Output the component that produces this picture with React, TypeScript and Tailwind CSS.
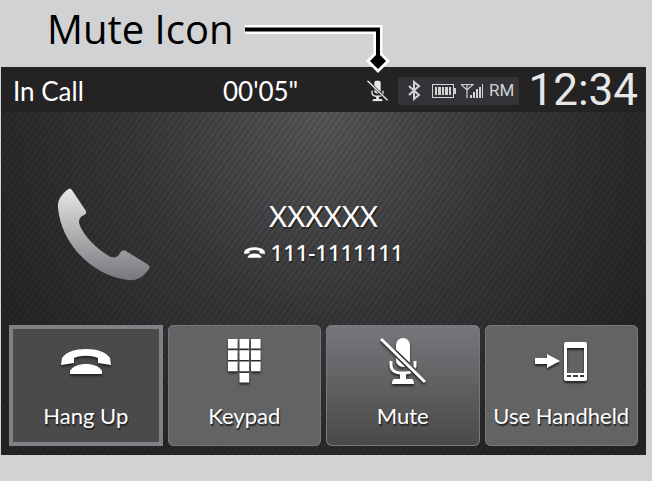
import type { ReactNode } from "react";

function MicOffIcon({ className }: { className?: string }) {
  return (
    <svg viewBox="0 0 46 47" className={className} fill="none" aria-hidden="true">
      <mask id="slash-gap" maskUnits="userSpaceOnUse" x="0" y="0" width="46" height="47">
        <path d="M0 0h46v47H0z" fill="#fff" />
        <path d="M1 1 45 44" stroke="#000" strokeWidth="6" />
      </mask>
      <g mask="url(#slash-gap)">
        <rect x="16" y="0" width="14" height="29" rx="7" fill="currentColor" />
        <path d="M11 23v4c0 5 4 8 9 8h6c5 0 9-3 9-8v-4" stroke="currentColor" strokeWidth="3" />
        <path d="M20 35h6v6h6q2 1 2 5H12q0-4 2-5h6z" fill="currentColor" />
      </g>
      <path d="M1 1 45 44" stroke="currentColor" strokeWidth="3" />
    </svg>
  );
}

function HangUpIcon({ className }: { className?: string }) {
  return (
    <svg viewBox="0 0 50 25" className={className} fill="currentColor" aria-hidden="true">
      <path d="M0 16 1 9C5 3 14 0 25 0s20 3 24 9l1 7-13-2v-5c-7-3-17-3-24 0v5z" />
      <path d="M9 25v-3c3-5 9-7 16-7s13 2 16 7v3z" />
    </svg>
  );
}

function KeypadIcon() {
  const keys = [[0, 0], [1, 0], [2, 0], [0, 1], [1, 1], [2, 1], [0, 2], [1, 2], [2, 2], [1, 3]];
  return (
    <svg viewBox="0 0 33 44" className="h-11 w-[33px]" fill="currentColor" aria-hidden="true">
      {keys.map(([x, y]) => (
        <rect key={`${x}${y}`} x={x * 11.5} y={y * 11.3} width="9.6" height="9.6" rx="0.6" />
      ))}
    </svg>
  );
}

function HandheldIcon() {
  return (
    <svg viewBox="0 0 52 39" className="h-[39px] w-[52px]" fill="currentColor" aria-hidden="true">
      <path d="M0 16h12v-4l13 7-13 7v-4H0z" />
      <path
        fillRule="evenodd"
        d="M31 0h19q2 0 2 2v35q0 2-2 2H31q-2 0-2-2V2q0-2 2-2zm1 6v25h17V6zm0 27v2h4v-2zm6 0v2h5v-2zm7 0v2h4v-2z"
      />
    </svg>
  );
}

function StatusPill() {
  return (
    <div className="flex h-7 w-[121px] items-center gap-[5px] rounded-xs bg-[#343337] pl-[10px] text-[#d1d2d4]">
      <svg viewBox="0 0 13 21" className="mr-1.5 h-[21px] w-[13px]" fill="none" stroke="currentColor" strokeWidth="2" aria-label="Bluetooth">
        <path d="M1 6l10 9-5 4V2l5 4-10 9" />
      </svg>
      <svg viewBox="0 0 24 14" className="h-[14px] w-6" fill="currentColor" aria-label="Battery">
        <path fillRule="evenodd" d="M0 0h22v4h2v6h-2v4H0zM1 1v12h20V1z" />
        <path d="M3 3h2v8H3zM6 3h3v8H6zM10 3h2v8h-2zM13 3h3v8h-3zM17 3h2v8h-2z" />
      </svg>
      <svg viewBox="0 0 23 14" className="h-[14px] w-[23px]" fill="currentColor" aria-label="Signal">
        <path d="M0 .5h12L6 6zM6 0v14" fill="none" stroke="currentColor" strokeWidth="1.2" />
        <path d="M9 11h2v3H9zM12 8h2v6h-2zM15 5h2v9h-2zM18 3h2v11h-2zM21 0h1v14h-1z" />
      </svg>
      <span className="font-[Roboto] text-[17px]">RM</span>
    </div>
  );
}

type ActionProps = { label: string; className: string; children: ReactNode };

function ActionButton({ label, className, children }: ActionProps) {
  return (
    <button type="button" className={`flex h-[121px] flex-col items-center pt-3 ${className}`}>
      <span className="flex h-12 items-center drop-shadow-[0_2px_1px_#222]">{children}</span>
      <span className="mt-[17px] text-[22px] leading-7 whitespace-nowrap text-shadow-[1px_2px_1px_#222]">{label}</span>
    </button>
  );
}

export default function App() {
  return (
    <div className="min-h-screen bg-[#d1d2d4] pr-1.5 pl-px font-[Lato,sans-serif] text-white">
      <div className="flex h-[67px] items-start pl-[46px] text-black">
        <p className="w-[185px] pt-1 font-['Open_Sans',sans-serif] text-[40px] leading-[50px] whitespace-nowrap">Mute Icon</p>
        <svg viewBox="0 0 146 48" className="relative z-10 mt-[25px] ml-3 h-12 w-[146px] shrink-0" fill="none" aria-hidden="true">
          <path d="M1 4.500H134V36" stroke="#fff" strokeWidth="9" />
          <path d="M134 24l12 12-12 12-12-12z" fill="#fff" />
          <path d="M1 4.500H134V36" stroke="#000" strokeWidth="4" />
          <path d="M134 28l8 8-8 8-8-8z" fill="#000" />
        </svg>
      </div>

      <main className="bg-[#242223]">
        <header className="flex h-[45px] items-center pr-2 pl-3">
          <h1 className="w-[210px] pt-1 text-[26px]">In Call</h1>
          <time className="pt-1 text-[26px]">00'05"</time>
          <MicOffIcon className="mt-0.5 mr-[10px] ml-auto h-[22px] w-[21px] text-[#e6e7e8]" />
          <div className="pt-0.5">
            <StatusPill />
          </div>
          <span className="w-[119px] text-right font-[Roboto] text-[44px] leading-none text-[#e6e7e8]">12:34</span>
        </header>

        <div className="bg-[repeating-linear-gradient(125deg,#0000_0_2px,#0000001f_3px_5px),radial-gradient(ellipse_at_50%_0%,#58585a_0%,#38373a_42%,#272526_80%)] px-2 pb-[9px]">
          <section className="grid h-[213px] grid-cols-[1fr_auto_1fr] items-center">
            <svg viewBox="0 0 93 93" className="ml-12 mt-8 size-[93px]" aria-hidden="true">
              <defs>
                <linearGradient id="handset" x1="0" y1="0" x2="0" y2="1">
                  <stop offset="0" stopColor="#e6e7e8" />
                  <stop offset="1" stopColor="#77787b" />
                </linearGradient>
              </defs>
              <path
                d="M10 2q3-3 5 0l14 21q1 3-2 4c-5 2-6 6-4 11 6 12 16 22 29 30 5 3 9 1 11-3q2-4 6-2l21 13q4 2 2 5c-6 8-12 12-21 11C35 88 4 55 1 20 0 13 4 7 10 2z"
                fill="url(#handset)"
              />
            </svg>
            <div className="flex flex-col items-center pt-[31px]">
              <p className="text-[28px] leading-9 text-shadow-[1px_2px_1px_#222]">XXXXXX</p>
              <p className="flex items-center gap-1.5 font-['Noto_Sans',sans-serif] text-[22px] leading-9 font-medium text-shadow-[1px_2px_1px_#222]">
                <HangUpIcon className="h-[11px] w-[21px]" />
                111-1111111
              </p>
            </div>
          </section>

          <nav className="grid grid-cols-4 gap-[5px]" aria-label="Call actions">
            <ActionButton label="Hang Up" className="bg-[#4a4a4c] outline-4 -outline-offset-4 outline-[#808184]">
              <HangUpIcon className="h-[25px] w-[50px]" />
            </ActionButton>
            <ActionButton label="Keypad" className="rounded-md bg-[#626365] inset-ring inset-ring-[#77787b]">
              <KeypadIcon />
            </ActionButton>
            <ActionButton label="Mute" className="rounded-md bg-linear-to-b from-[#77787b] to-[#49494b] inset-ring inset-ring-[#77787b]">
              <MicOffIcon className="h-[47px] w-[46px]" />
            </ActionButton>
            <ActionButton label="Use Handheld" className="rounded-md bg-[#626365] inset-ring inset-ring-[#77787b]">
              <HandheldIcon />
            </ActionButton>
          </nav>
        </div>
      </main>
    </div>
  );
}
